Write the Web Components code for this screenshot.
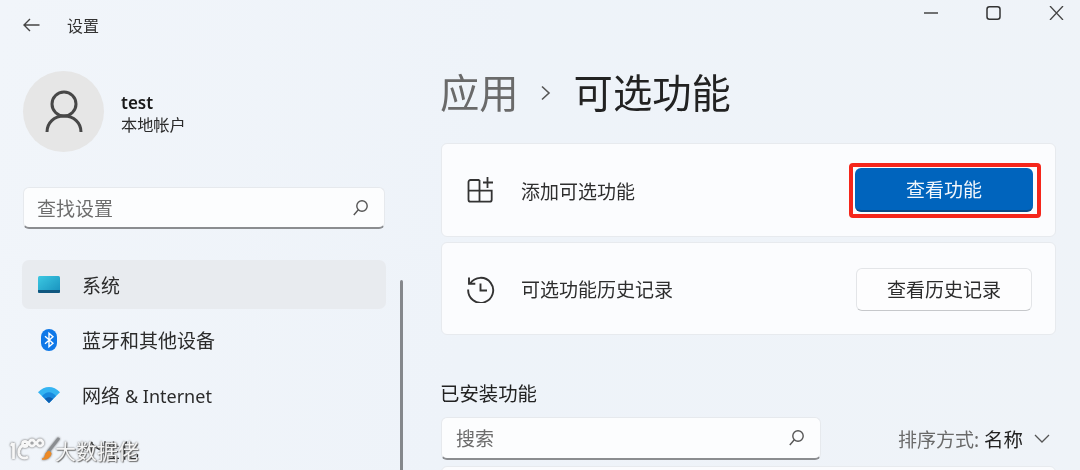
<!DOCTYPE html>
<html lang="zh-CN">
<head>
<meta charset="utf-8">
<title>设置</title>
<style>
  html, body { margin: 0; height: 100%; overflow: hidden; }
  body { font-family: "Noto Sans", "Noto Sans CJK SC", sans-serif; color: #1f1f1f; }
</style>
</head>
<body>
<settings-window>
  <div slot="side">
    <back-header>设置</back-header>
    <user-card name="test" kind="本地帐户"></user-card>
    <search-box label="查找设置" style="margin-top:35px;width:362px;height:42px"></search-box>
    <nav-list>
      <nav-item active>
        <svg slot="icon" width="22" height="18" viewBox="0 0 22 18"><defs><linearGradient id="sys" x1="0" y1="0" x2="1" y2="1"><stop offset="0" stop-color="#3cc8e2"/><stop offset="1" stop-color="#1790bd"/></linearGradient></defs><rect width="22" height="17" rx="1.5" fill="url(#sys)"/><path d="M0 14h22v1.500a1.500 1.500 0 0 1-1.500 1.500h-19A1.500 1.500 0 0 1 0 15.500z" fill="#10577f"/></svg>
        系统
      </nav-item>
      <nav-item>
        <svg slot="icon" width="16" height="22" viewBox="0 0 16 22"><rect width="16" height="22" rx="8" fill="#0f78e8"/><path d="M4 7.200l8 7-4 3.600V4.200l4 3.600-8 7" fill="none" stroke="#fff" stroke-width="1.400"/></svg>
        蓝牙和其他设备
      </nav-item>
      <nav-item>
        <svg slot="icon" width="22" height="16" viewBox="0 0 22 16"><path d="M0 5.200C6.500-1.700 15.500-1.700 22 5.200L11 16z" fill="#35b4f2"/><path d="M4 9.100C8 4 14 4 18 9.100L11 16z" fill="#1a8ade"/><path d="M6.800 11.800c2.600-2.200 5.800-2.200 8.400 0L11 16z" fill="#0f5fb0"/></svg>
        <span>网络 <span style="font-size:18px">&amp; Internet</span></span>
      </nav-item>
      <nav-item>个性化</nav-item>
    </nav-list>
  </div>
  <div slot="main">
    <window-controls></window-controls>
    <page-title parent="应用" current="可选功能"></page-title>
    <feature-card style="margin-top:23px;height:94px">
      <svg slot="icon" width="28" height="28" viewBox="0 0 28 28" fill="none" stroke="#333" stroke-width="1.800"><path d="M12.500 4H3.500A2 2 0 0 0 1.500 6V23.700A2 2 0 0 0 3.500 25.700H22.700A2 2 0 0 0 24.700 23.700V14.700H1.500M12.500 4V25.700"/><path d="M20.500 1V12M16 6.500H26"/></svg>
      添加可选功能
      <fluent-button slot="action" primary ring>查看功能</fluent-button>
    </feature-card>
    <feature-card style="margin-top:5px;height:93px">
      <svg slot="icon" width="28" height="28" viewBox="0 0 28 28" fill="none" stroke="#333" stroke-width="1.900"><path d="M3.200 8.500A12.500 12.500 0 1 1 1.200 14.500"/><path d="M2 2.500v6.300h6.300"/><path d="M13.500 8.500v7h6.500"/></svg>
      可选功能历史记录
      <fluent-button slot="action">查看历史记录</fluent-button>
    </feature-card>
    <section-head>已安装功能</section-head>
    <filter-row>
      <search-box label="搜索" style="width:380px;height:43px;padding-left:14px"></search-box>
      <sort-select slot="sort" label="排序方式:" value="名称"></sort-select>
    </filter-row>
    <feature-card style="margin-top:6px;height:60px"></feature-card>
  </div>
</settings-window>
<water-mark></water-mark>

<script>
class SettingsWindow extends HTMLElement {
  constructor() {
    super();
    this.attachShadow({ mode: 'open' });
  }
  connectedCallback() {
    this.shadowRoot.innerHTML = `
      <style>
        :host { display: grid; grid-template-columns: 441px 615px; width: 1080px; height: 470px; overflow: hidden;
          background: linear-gradient(100deg, #f1f5fa 0%, #eef3f9 45%, #eff3f8 100%); position: relative; filter: blur(.3px); }
        .side { padding-left: 23px; position: relative; min-width: 0; }
        .bar { position: absolute; left: 400px; top: 280px; bottom: 0; width: 3px; border-radius: 2px; background: #85888c; }
      </style>
      <div class="side"><slot name="side"></slot><div class="bar"></div></div>
      <div><slot name="main"></slot></div>`;
  }
}
class BackHeader extends HTMLElement {
  constructor() {
    super();
    this.attachShadow({ mode: 'open' });
  }
  connectedCallback() {
    this.shadowRoot.innerHTML = `
      <style>
        :host { display: flex; align-items: center; height: 49px; gap: 27px; font-size: 16px; color: #333; }
        svg { display: block; margin-top: 1px; }
      </style>
      <svg width="17" height="14" viewBox="0 0 17 14" fill="none" stroke="#444" stroke-width="1.400"><path d="M16.500 7H1M7 1L1 7l6 6"/></svg>
      <span><slot></slot></span>`;
  }
}
class UserCard extends HTMLElement {
  constructor() {
    super();
    this.attachShadow({ mode: 'open' });
  }
  connectedCallback() {
    this.shadowRoot.innerHTML = `
      <style>
        :host { display: flex; align-items: center; gap: 17px; height: 81px; margin-top: 22px; }
        .avatar { width: 81px; height: 81px; border-radius: 50%; background: #e6e6e6; display: flex; align-items: center; justify-content: center; }
        .info { padding-top: 5px; }
        .name { font-size: 17px; font-weight: 600; line-height: 22px; color: #1a1a1a; }
        .kind { font-size: 16.200px; line-height: 23px; color: #2b2b2b; }
      </style>
      <div class="avatar">
        <svg width="38" height="44" viewBox="0 0 38 44" fill="none" stroke="#474747" stroke-width="3"><circle cx="19" cy="14" r="12"/><path d="M2 42c0-9 7-16 17-16s17 7 17 16"/></svg>
      </div>
      <div class="info"><div class="name">${this.getAttribute('name')}</div><div class="kind">${this.getAttribute('kind')}</div></div>`;
  }
}
class SearchBox extends HTMLElement {
  constructor() {
    super();
    this.attachShadow({ mode: 'open' });
  }
  connectedCallback() {
    this.shadowRoot.innerHTML = `
      <style>
        :host { display: flex; align-items: center; justify-content: space-between; box-sizing: border-box; padding: 0 16px 0 13px;
          background: #fcfdfe; border: 1px solid #e6e9ed; border-bottom: 2px solid #8b8d90; border-radius: 6px; font-size: 19px; color: #6d6d6d; }
        svg { display: block; }
      </style>
      <span>${this.getAttribute('label')}</span>
      <svg width="15" height="16" viewBox="0 0 15 16" fill="none" stroke="#555" stroke-width="1.400"><circle cx="9" cy="6" r="5.200"/><path d="M5.300 9.800L.8 15"/></svg>`;
  }
}
class NavList extends HTMLElement {
  constructor() {
    super();
    this.attachShadow({ mode: 'open' });
  }
  connectedCallback() {
    this.shadowRoot.innerHTML = `
      <style>:host { display: flex; flex-direction: column; gap: 6px; margin: 31px 0 0 -1px; width: 364px; }</style>
      <slot></slot>`;
  }
}
class NavItem extends HTMLElement {
  constructor() {
    super();
    this.attachShadow({ mode: 'open' });
  }
  connectedCallback() {
    this.shadowRoot.innerHTML = `
      <style>
        :host { display: flex; align-items: center; flex: none; height: 49px; border-radius: 7px; font-size: 19px; color: #2b2b2b; }
        :host([active]) { background: #e8ebef; }
        .icon { width: 54px; margin-right: 6px; display: flex; justify-content: center; }
        ::slotted(svg) { display: block; }
      </style>
      <span class="icon"><slot name="icon"></slot></span>
      <span><slot></slot></span>`;
  }
}
class WindowControls extends HTMLElement {
  constructor() {
    super();
    this.attachShadow({ mode: 'open' });
  }
  connectedCallback() {
    this.shadowRoot.innerHTML = `
      <style>
        :host { display: flex; justify-content: flex-end; align-items: flex-start; gap: 48px; height: 66px; width: 623px; padding-top: 6px; box-sizing: border-box; }
        svg { display: block; }
      </style>
      <svg width="14" height="14" viewBox="0 0 14 14" stroke="#444" stroke-width="1.500" fill="none"><path d="M0 7h14"/></svg>
      <svg width="15" height="14" viewBox="0 0 15 14" stroke="#333" stroke-width="1.500" fill="none"><rect x="1" y=".8" width="13" height="12.400" rx="2.500"/></svg>
      <svg width="15" height="14" viewBox="0 0 15 14" stroke="#444" stroke-width="1.300" fill="none"><path d="M1 0l13 14M14 0L1 14"/></svg>`;
  }
}
class PageTitle extends HTMLElement {
  constructor() {
    super();
    this.attachShadow({ mode: 'open' });
  }
  connectedCallback() {
    this.shadowRoot.innerHTML = `
      <style>
        :host { display: flex; align-items: center; height: 54px; margin-left: -1px; font-size: 39.300px; line-height: 54px; }
        .parent { color: #6a6a6a; }
        .current { color: #222; }
        svg { display: block; margin: 0 23px 0 21px; }
      </style>
      <span class="parent">${this.getAttribute('parent')}</span>
      <svg width="11" height="16" viewBox="0 0 11 16" fill="none" stroke="#555" stroke-width="1.600"><path d="M2 1.500L9 8l-7 6.500"/></svg>
      <span class="current">${this.getAttribute('current')}</span>`;
  }
}
class FeatureCard extends HTMLElement {
  constructor() {
    super();
    this.attachShadow({ mode: 'open' });
  }
  connectedCallback() {
    this.shadowRoot.innerHTML = `
      <style>
        :host { display: flex; align-items: center; box-sizing: border-box; width: 615px; padding: 0 23px 0 25px; gap: 26px;
          background: #fbfcfe; border: 1px solid #e7eaee; border-radius: 6px; font-size: 19px; color: #2e2e2e; }
        ::slotted(svg) { display: block; flex: none; }
        .text { flex: 1; padding-top: 1px; }
      </style>
      <slot name="icon"></slot>
      <span class="text"><slot></slot></span>
      <slot name="action"></slot>`;
  }
}
class FluentButton extends HTMLElement {
  constructor() {
    super();
    this.attachShadow({ mode: 'open' });
  }
  connectedCallback() {
    this.shadowRoot.innerHTML = `
      <style>
        :host { display: flex; align-items: center; justify-content: center; box-sizing: border-box; width: 176px; height: 43px; margin-top: 1px; position: relative;
          background: #fdfdfe; border: 1px solid #e3e5e8; border-bottom-color: #c6c8cb; border-radius: 6px; font-size: 19px; color: #2b2b2b; }
        :host([primary]) { background: #0064bd; border: 0; border-bottom: 2px solid #0a4a86; color: #f2f7fc; width: 178px; height: 44px; margin: 0 -1px 0 0; }
        :host([ring])::after { content: ""; position: absolute; left: -6px; right: -8px; top: -5px; bottom: -8px; border: 4px solid #f5261b; border-radius: 4px; }
      </style>
      <slot></slot>`;
  }
}
class SectionHead extends HTMLElement {
  constructor() {
    super();
    this.attachShadow({ mode: 'open' });
  }
  connectedCallback() {
    this.shadowRoot.innerHTML = `
      <style>:host { display: block; margin: 46px 0 0 -1px; height: 26px; line-height: 26px; font-size: 19.400px; color: #222; }</style>
      <slot></slot>`;
  }
}
class FilterRow extends HTMLElement {
  constructor() {
    super();
    this.attachShadow({ mode: 'open' });
  }
  connectedCallback() {
    this.shadowRoot.innerHTML = `
      <style>:host { display: flex; align-items: center; justify-content: space-between; width: 609px; margin-top: 10px; }</style>
      <slot></slot><slot name="sort"></slot>`;
  }
}
class SortSelect extends HTMLElement {
  constructor() {
    super();
    this.attachShadow({ mode: 'open' });
  }
  connectedCallback() {
    this.shadowRoot.innerHTML = `
      <style>
        :host { display: flex; align-items: center; font-size: 19.500px; color: #6a6a6a; }
        .label { font-size: 19px; }
        b { font-weight: 400; color: #222; margin-left: 5px; }
        svg { display: block; margin-left: 11px; }
      </style>
      <span class="label">${this.getAttribute('label')}</span><b>${this.getAttribute('value')}</b>
      <svg width="16" height="9" viewBox="0 0 16 9" fill="none" stroke="#555" stroke-width="1.300"><path d="M1 1l7 7 7-7"/></svg>`;
  }
}
class WaterMark extends HTMLElement {
  constructor() {
    super();
    this.attachShadow({ mode: 'open' });
  }
  connectedCallback() {
    this.shadowRoot.innerHTML = `
      <style>
        :host { position: absolute; left: 9px; top: 437px; display: flex; align-items: center; height: 26px; font-size: 21px; color: #f4f4f4;
          text-shadow: 0 0 2px #5f5f5f, 1px 1px 1px #777; filter: blur(.4px); }
        svg { display: block; flex: none; margin-right: -6px; filter: drop-shadow(0 0 1.200px #555); }
      </style>
      <svg width="52" height="26" viewBox="0 0 52 26" fill="none" stroke="#f7f7f7" stroke-width="2.800">
        <path d="M4 6l-2 3M4.500 6v16M19 8C12 7 9 12 10 17c1 4 5 5 9 3"/>
        <circle cx="16" cy="7" r="2.500"/><circle cx="23" cy="6" r="3"/><circle cx="31" cy="6" r="3"/>
        <path d="M50 1L39 15" stroke="#8a8d90" stroke-width="2.800"/>
        <path d="M40 14c-3 1-4 4-4 6-1 1-2 2-3 2 5 1 9-2 9-6z" fill="#ee8a25" stroke="#ee8a25" stroke-width="1"/>
      </svg>
      <span>大数据佬</span>`;
  }
}
customElements.define('settings-window', SettingsWindow);
customElements.define('back-header', BackHeader);
customElements.define('user-card', UserCard);
customElements.define('search-box', SearchBox);
customElements.define('nav-list', NavList);
customElements.define('nav-item', NavItem);
customElements.define('window-controls', WindowControls);
customElements.define('page-title', PageTitle);
customElements.define('feature-card', FeatureCard);
customElements.define('fluent-button', FluentButton);
customElements.define('section-head', SectionHead);
customElements.define('filter-row', FilterRow);
customElements.define('sort-select', SortSelect);
customElements.define('water-mark', WaterMark);
</script>
</body>
</html>
